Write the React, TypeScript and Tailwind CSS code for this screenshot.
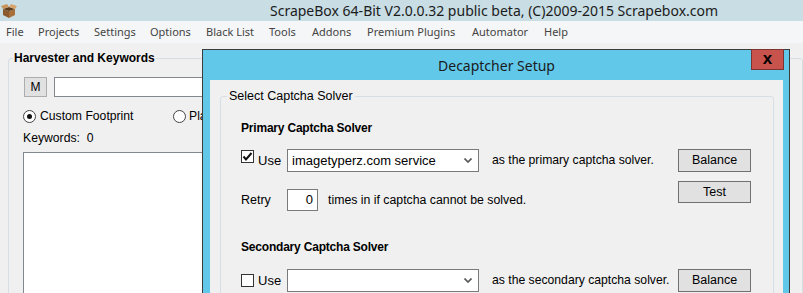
import React from "react";

const BoxIcon: React.FC = () => (
  <svg width="16" height="16" viewBox="0 0 16 16" className="ml-[1px]">
    <polygon points="2,6 8,8 8,15 2,12" fill="#8a5a2e" />
    <polygon points="8,8 14,6 14,12 8,15" fill="#a86f3a" />
    <polygon points="2,6 8,4 14,6 8,8" fill="#5c3a1c" />
    <polygon points="2,6 0,3 6,1 8,4" fill="#c89358" />
    <polygon points="14,6 16,3 10,1 8,4" fill="#d7a36a" />
  </svg>
);

const MENU: [string, string][] = [
  ["File", "w-[32px]"],
  ["Projects", "w-[56px]"],
  ["Settings", "w-[56px]"],
  ["Options", "w-[56px]"],
  ["Black List", "w-[63px]"],
  ["Tools", "w-[43px]"],
  ["Addons", "w-[55px]"],
  ["Premium Plugins", "w-[105px]"],
  ["Automator", "w-[72px]"],
  ["Help", "w-[40px]"],
];

const Checkbox: React.FC<{ checked?: boolean }> = ({ checked }) => (
  <div className="w-[13px] h-[13px] border border-[#333] bg-white flex items-center justify-center shrink-0">
    {checked && (
      <svg width="11" height="11" viewBox="0 0 11 11">
        <path d="M1.5 5.5 L4 8.5 L9.5 2" stroke="#111" strokeWidth="2" fill="none" />
      </svg>
    )}
  </div>
);

const Radio: React.FC<{ checked?: boolean }> = ({ checked }) => (
  <div className="w-[13px] h-[13px] rounded-full border border-[#444] bg-white flex items-center justify-center shrink-0">
    {checked && <div className="w-[5px] h-[5px] rounded-full bg-[#111]" />}
  </div>
);

const Combo: React.FC<{ value?: string }> = ({ value }) => (
  <div className="w-[192px] h-[23px] border border-[#7a7a7a] bg-white flex items-center pl-[4px] pr-[6px] shrink-0">
    <span className="flex-1 text-[13px] whitespace-nowrap">{value}</span>
    <svg width="8" height="5" viewBox="0 0 8 5">
      <path d="M0.5 0.5 L4 4 L7.5 0.5" stroke="#555" strokeWidth="1.6" fill="none" />
    </svg>
  </div>
);

const Button: React.FC<{ label: string; tall?: boolean }> = ({ label, tall = true }) => (
  <div
    className={`ml-auto w-[73px] ${tall ? "h-[23px]" : "h-[22px]"} border border-[#707070] bg-[#e1e1e1] flex items-center justify-center text-[12.5px] shrink-0`}
  >
    {label}
  </div>
);

export default function App() {
  return (
    <div className="w-[803px] h-[293px] overflow-hidden relative bg-[#f0f0f0] font-['Liberation_Sans',Arial,sans-serif] text-[12px] text-black">
      {/* window title */}
      <div className="h-[21px] bg-[#c8dde4] flex items-center">
        <BoxIcon />
        <div className="pl-[253px] font-['Noto_Sans',sans-serif] text-[14px] leading-[21px] text-[#1b1b1b] whitespace-nowrap">
          ScrapeBox 64-Bit V2.0.0.32 public beta, (C)2009-2015 Scrapebox.com
        </div>
      </div>

      {/* menu bar */}
      <div className="h-[22px] bg-[#f5f6f7] flex items-center pl-[6px] font-['Noto_Sans',sans-serif] text-[11px] text-[#444]">
        {MENU.map(([name, w]) => (
          <span key={name} className={`${w} whitespace-nowrap`}>
            {name}
          </span>
        ))}
      </div>

      {/* main window body */}
      <div className="flex pt-[8px]">
        <fieldset className="ml-[8px] w-[770px] border border-[#d5dfe5] rounded-[3px] p-0">
          <legend className="ml-[4px] px-[1px] font-bold leading-[14px]">Harvester and Keywords</legend>
          <div className="pl-[14px] pt-[12px]">
            <div className="flex items-center">
              <div className="ml-[1px] w-[23px] h-[20px] border border-[#adadad] bg-[#e1e1e1] flex items-center justify-center text-[12px]">
                M
              </div>
              <div className="ml-[7px] w-[600px] h-[20px] border border-[#828790] bg-white" />
            </div>
            <div className="flex items-center mt-[13px] h-[13px]">
              <Radio checked />
              <span className="ml-[4px] w-[133px] text-[12.2px]">Custom Footprint</span>
              <Radio />
              <span className="ml-[3px] text-[12.2px]">Platforms</span>
            </div>
            <div className="mt-[8px] leading-[14px] text-[12.2px]">Keywords:&nbsp; 0</div>
            <div className="mt-[7px] w-[600px] h-[200px] border border-[#828790] bg-white" />
          </div>
        </fieldset>
        <fieldset className="ml-[7px] w-[200px] border border-[#d5dfe5] rounded-[3px] p-0">
          <legend className="ml-[6px] font-bold leading-[14px]">M</legend>
        </fieldset>
      </div>

      {/* Decaptcher dialog */}
      <div className="absolute left-[202px] top-[49px] w-[588px] h-[300px] border border-[#3c3c3c] bg-[#62c8ea] pl-[7px] pr-[6px] flex flex-col">
        <div className="h-[30px] relative flex items-center justify-center">
          <span className="font-['Noto_Sans',sans-serif] text-[14px] text-[#1b1b1b]">Decaptcher Setup</span>
          <div className="absolute right-[-1px] top-[-1px] w-[33px] h-[21px] bg-[#c7534c] border border-[#7d3430] flex items-center justify-center">
            <span className="font-bold text-[17px] leading-none mb-[3px]">x</span>
          </div>
        </div>
        <div className="flex-1 bg-[#f0f0f0] pl-[10px]">
          <fieldset className="mt-[9px] w-[554px] border border-[#d5dfe5] rounded-[3px] p-0">
            <legend className="ml-[6px] px-[2px] leading-[14px] text-[12.5px]">Select Captcha Solver</legend>
            <div className="pl-[20px] pr-[22px]">
              <div className="mt-[18px] font-bold leading-[14px] text-[12px] tracking-[-0.2px]">Primary Captcha Solver</div>

              <div className="mt-[14px] h-[23px] flex items-start">
                <div className="w-[46px] flex items-start shrink-0">
                  <div className="mt-[1px]">
                    <Checkbox checked />
                  </div>
                  <span className="ml-[4px] leading-[23px] text-[13px]">Use</span>
                </div>
                <Combo value="imagetyperz.com service" />
                <span className="ml-[13px] leading-[23px] text-[12.2px] whitespace-nowrap">as the primary captcha solver.</span>
                <Button label="Balance" />
              </div>

              <div className="mt-[9px] flex items-start">
                <div className="mt-[8px] flex items-center">
                  <span className="w-[46px] leading-[22px] text-[12.5px]">Retry</span>
                  <div className="w-[31px] h-[22px] border border-[#7a7a7a] bg-white text-right pr-[4px] leading-[20px] text-[13px]">
                    0
                  </div>
                  <span className="ml-[10px] leading-[22px] text-[12.3px] whitespace-nowrap">times in if captcha cannot be solved.</span>
                </div>
                <Button label="Test" tall={false} />
              </div>

              <div className="mt-[29px] font-bold leading-[14px] text-[12px] tracking-[-0.2px]">Secondary Captcha Solver</div>

              <div className="mt-[15px] h-[23px] flex items-start">
                <div className="w-[46px] flex items-start shrink-0">
                  <div className="mt-[5px]">
                    <Checkbox />
                  </div>
                  <span className="ml-[4px] leading-[23px] text-[13px]">Use</span>
                </div>
                <Combo />
                <span className="ml-[13px] leading-[23px] text-[12.2px] whitespace-nowrap">as the secondary captcha solver.</span>
                <Button label="Balance" />
              </div>
              <div className="h-[40px]" />
            </div>
          </fieldset>
        </div>
      </div>
    </div>
  );
}
